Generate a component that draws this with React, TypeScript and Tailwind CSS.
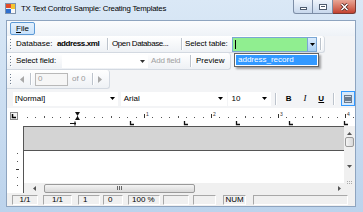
import React from "react";

function Arrow({ color = "#000" }: { color?: string }) {
  return (
    <svg width="5" height="3" viewBox="0 0 5 3">
      <polygon points="0,0 5,0 2.5,3" fill={color} />
    </svg>
  );
}

function Grip() {
  return (
    <div className="flex h-[12px] w-[2px] flex-col justify-between py-[1px]">
      {[0, 1, 2, 3].map((i) => (
        <div key={i} className="h-[1px] w-[1px] bg-[#6b7a8c] shadow-[1px_1px_0_#fff]" />
      ))}
    </div>
  );
}

function Sep({ w = 7 }: { w?: number }) {
  return (
    <div className="flex h-full items-center justify-center" style={{ width: w }}>
      <div className="h-[12px] w-px bg-[#bcc3cc]" />
      <div className="h-[12px] w-px bg-white" />
    </div>
  );
}

function TitleBar() {
  return (
    <div className="flex h-[20px] shrink-0 items-start">
      <div className="ml-[5px] mt-[3px] h-[11px] w-[11px]">
        <svg width="11" height="11" viewBox="0 0 11 11">
          <rect x="0.5" y="0.5" width="10" height="10" fill="#e9eef5" stroke="#8093ab" />
          <rect x="1" y="1" width="5" height="4" fill="#e24a2a" />
          <rect x="6" y="1" width="4" height="5" fill="#f4c430" />
          <rect x="1" y="6" width="5" height="4" fill="#2f6fcf" />
          <rect x="6" y="6" width="4" height="4" fill="#f7f7f7" />
        </svg>
      </div>
      <div className="ml-[5px] mt-[5px] whitespace-nowrap text-[7.8px] tracking-[-0.2px] text-black">
        TX Text Control Sample: Creating Templates
      </div>
      <div className="ml-auto mr-[7px] flex">
        <div className="flex h-[14px] w-[20px] items-center justify-center rounded-bl-[3px] border border-t-0 border-[#7d8ea6] bg-gradient-to-b from-[#eef4fb] to-[#c8d8ec]">
          <div className="mt-[4px] h-[3px] w-[7px] border border-[#4d5b6e] bg-white" />
        </div>
        <div className="flex h-[14px] w-[20px] items-center justify-center border-y border-r border-t-0 border-[#7d8ea6] bg-gradient-to-b from-[#eef4fb] to-[#c8d8ec]">
          <div className="h-[6px] w-[8px] border border-[#4d5b6e] bg-white p-[1px]">
            <div className="h-full w-full border-t border-[#4d5b6e]" />
          </div>
        </div>
        <div className="flex h-[14px] w-[23px] items-center justify-center rounded-br-[3px] border border-l-0 border-t-0 border-[#7a3a32] bg-gradient-to-b from-[#e8a696] to-[#c3412f]">
          <svg width="9" height="8" viewBox="0 0 9 8">
            <path d="M1.5 1 L7.5 7 M7.5 1 L1.5 7" stroke="#4a1a14" strokeWidth="3" />
            <path d="M1.5 1 L7.5 7 M7.5 1 L1.5 7" stroke="#fff" strokeWidth="1.6" />
          </svg>
        </div>
      </div>
    </div>
  );
}

function MenuBar() {
  return (
    <div className="flex h-[15px] shrink-0 items-center bg-gradient-to-b from-[#fbfcfd] to-[#eef2f7]">
      <div className="ml-[3px] flex h-[13px] w-[25px] items-center justify-center rounded-[2px] border border-[#5d9ad6] bg-gradient-to-b from-[#e4f1fd] to-[#c9e2fb]">
        <span>
          <span className="underline">F</span>ile
        </span>
      </div>
    </div>
  );
}

function ToolbarOne() {
  return (
    <div className="flex h-[17px] shrink-0">
      <div className="flex h-full w-[318px] items-center rounded-r-[3px] border-b border-r border-[#d3d9e1] bg-gradient-to-b from-white to-[#eef1f5]">
        <div className="flex w-[9px] justify-end pr-[4px]">
          <Grip />
        </div>
        <span className="w-[41px] whitespace-nowrap">Database:</span>
        <span className="w-[47px] whitespace-nowrap font-bold tracking-[-0.4px]">address.xml</span>
        <Sep w={7} />
        <span className="w-[68px] whitespace-nowrap pl-[1px] tracking-[-0.4px]">Open Database...</span>
        <Sep w={6} />
        <span className="w-[47px] whitespace-nowrap tracking-[-0.1px]">Select table:</span>
        <div className="flex h-[15px] w-[85px] items-stretch border border-[#7aa6d4] bg-[#90ee90]">
          <div className="ml-[2px] mt-[2px] h-[9px] w-px bg-black" />
          <div className="ml-auto flex w-[9px] items-center justify-center border-l border-[#7aa6d4] bg-gradient-to-b from-[#d9ebfc] to-[#a9cff3]">
            <Arrow />
          </div>
        </div>
        <Sep w={7} />
      </div>
    </div>
  );
}

function ToolbarTwo() {
  return (
    <div className="relative flex h-[17px] shrink-0">
      <div className="flex h-full w-[224px] items-center rounded-r-[3px] border-b border-r border-[#d3d9e1] bg-gradient-to-b from-white to-[#eef1f5]">
        <div className="flex w-[9px] justify-end pr-[4px]">
          <Grip />
        </div>
        <span className="w-[46px] whitespace-nowrap tracking-[-0.1px]">Select field:</span>
        <div className="flex h-[13px] w-[86px] items-center justify-end bg-white pr-[3px]">
          <Arrow color="#333" />
        </div>
        <span className="w-[39px] whitespace-nowrap pl-[3px] tracking-[-0.2px] text-[#a0a0a0]">Add field</span>
        <Sep w={7} />
        <span className="whitespace-nowrap pl-[2px]">Preview</span>
      </div>
      <div className="absolute left-[227px] top-0 w-[85px] border border-[#646464] bg-white p-px shadow-[2px_2px_2px_rgba(0,0,0,0.35)]">
        <div className="flex h-[10px] items-center bg-[#3399ff] pl-[2px] text-white">address_record</div>
      </div>
    </div>
  );
}

function ToolbarThree() {
  return (
    <div className="flex h-[19px] shrink-0">
      <div className="flex h-full w-[103px] items-center rounded-r-[3px] border-b border-r border-[#d3d9e1] bg-gradient-to-b from-white to-[#eef1f5]">
        <div className="flex w-[9px] justify-end pr-[4px]">
          <Grip />
        </div>
        <div className="flex w-[12px] justify-center">
          <svg width="4" height="7" viewBox="0 0 4 7">
            <polygon points="4,0 4,7 0,3.5" fill="#a8a8a8" />
          </svg>
        </div>
        <Sep w={6} />
        <div className="ml-px flex h-[13px] w-[33px] items-center border border-[#b9b9b9] bg-[#f6f6f6] pl-[2px] text-[#9a9a9a]">
          0
        </div>
        <span className="w-[22px] whitespace-nowrap pl-[4px] text-[#9a9a9a]">of 0</span>
        <Sep w={5} />
        <div className="flex w-[9px] justify-center">
          <svg width="4" height="7" viewBox="0 0 4 7">
            <polygon points="0,0 0,7 4,3.5" fill="#a8a8a8" />
          </svg>
        </div>
      </div>
    </div>
  );
}

function FormatBar() {
  return (
    <div className="flex h-[19px] shrink-0 items-center bg-[#f3f4f6]">
      <div className="ml-[6px] flex h-[14px] w-[109px] items-center justify-between bg-white pl-[2px] pr-[3px]">
        <span>[Normal]</span>
        <Arrow />
      </div>
      <div className="ml-[3px] flex h-[14px] w-[111px] items-center justify-between bg-white pl-[3px] pr-[4px]">
        <span>Arial</span>
        <Arrow />
      </div>
      <div className="ml-px flex h-[14px] w-[44px] items-center justify-between bg-white pl-[3px] pr-[4px]">
        <span>10</span>
        <Arrow />
      </div>
      <Sep w={10} />
      <div className="flex w-[17px] justify-center font-bold">B</div>
      <div className="flex w-[17px] justify-center font-['Liberation_Serif',serif] text-[9px] italic">I</div>
      <div className="flex w-[17px] justify-center font-bold underline">U</div>
      <Sep w={10} />
      <div className="ml-[2px] flex h-[15px] w-[14px] shrink-0 items-center justify-center border border-[#3399ff] bg-[#d6e9fc]">
        <div className="flex h-[8px] w-[8px] flex-col justify-between bg-[#6b7b8e] p-px">
          <div className="h-px bg-[#cfd8e3]" />
          <div className="h-px bg-[#cfd8e3]" />
        </div>
      </div>
    </div>
  );
}

function Ruler() {
  const zero = 70;
  const unit = 67 / 8;
  const marks: React.ReactNode[] = [];
  for (let k = -6; k <= 33; k++) {
    const x = Math.round(zero + k * unit);
    if (x > 346) break;
    if (k % 8 === 0 && k > 0) {
      marks.push(<rect key={"t" + k} x={x} y={6} width={1} height={4} fill="#333" />);
      marks.push(
        <text key={"n" + k} x={x + 2} y={8} fontSize="5" fontFamily="Liberation Sans, Arial, sans-serif" fill="#333">
          {k / 8}
        </text>
      );
    } else if (k % 4 === 0) {
      marks.push(<rect key={"h" + k} x={x} y={8} width={1} height={2} fill="#555" />);
    } else {
      marks.push(<rect key={"d" + k} x={x} y={9} width={1} height={1} fill="#555" />);
    }
  }
  const tabs = [123, 177, 229, 282, 337];
  return (
    <div className="h-[18px] shrink-0 bg-white">
      <svg width="349" height="18" viewBox="0 0 349 18">
        <rect x="3.5" y="4.5" width="7" height="7" fill="#f4f4f4" stroke="#8a8a8a" />
        <path d="M5.5 6 V9.5 H9" stroke="#000" strokeWidth="1.5" fill="none" />
        {marks}
        <polygon points="68,4 73,4 70.5,8 73,12 68,12 70.5,8" fill="#111" />
        <path d="M63 15.5 H69 M68 13.5 V17.5" stroke="#111" strokeWidth="1.2" />
        {tabs.map((t) => (
          <path key={t} d={`M${t + 0.5} 13 V16.5 H${t + 4}`} stroke="#111" strokeWidth="1.3" fill="none" />
        ))}
      </svg>
    </div>
  );
}

function DocumentArea() {
  return (
    <div className="flex h-[67px] shrink-0 bg-white">
      <div className="w-[16px] shrink-0">
        <svg width="16" height="67" viewBox="0 0 16 67">
          {[27, 35, 51, 59].map((y) => (
            <rect key={y} x="10" y={y} width="1" height="1" fill="#555" />
          ))}
          <rect x="9" y="43" width="3" height="1" fill="#333" />
        </svg>
      </div>
      <div className="flex w-[321px] flex-col border-l border-[#555]">
        <div className="h-[25px] border-y border-[#555] bg-[#d4d4d4]" />
        <div className="flex-1 bg-white" />
        <div className="flex h-[10px] items-center bg-[#f0f0f0]">
          <div className="flex w-[20px] justify-center">
            <svg width="3" height="5" viewBox="0 0 3 5">
              <polygon points="3,0 3,5 0,2.5" fill="#555" />
            </svg>
          </div>
          <div className="flex h-[9px] w-[151px] items-center justify-center rounded-[2px] border border-[#9a9a9a] bg-gradient-to-b from-[#f4f4f4] to-[#d9d9d9]">
            <div className="flex gap-px">
              <div className="h-[4px] w-px bg-[#666]" />
              <div className="h-[4px] w-px bg-[#666]" />
              <div className="h-[4px] w-px bg-[#666]" />
            </div>
          </div>
          <div className="ml-auto flex w-[10px] justify-center">
            <svg width="3" height="5" viewBox="0 0 3 5">
              <polygon points="0,0 0,5 3,2.5" fill="#555" />
            </svg>
          </div>
        </div>
      </div>
      <div className="flex w-[11px] flex-col bg-[#f0f0f0]">
        <div className="flex h-[11px] items-end justify-center pb-[2px]">
          <svg width="5" height="3" viewBox="0 0 5 3">
            <polygon points="0,3 5,3 2.5,0" fill="#555" />
          </svg>
        </div>
        <div className="mx-px h-[10px] rounded-[2px] border border-[#9a9a9a] bg-gradient-to-r from-[#f4f4f4] to-[#d9d9d9]" />
        <div className="flex h-[24px] items-end justify-center pb-[3px]">
          <Arrow color="#555" />
        </div>
        <div className="flex flex-1 items-center justify-center">
          <div className="grid grid-cols-3 gap-px">
            {[0, 1, 2, 3, 4, 5].map((i) => (
              <div key={i} className="h-px w-px bg-[#aaa]" />
            ))}
          </div>
        </div>
      </div>
    </div>
  );
}

const PANELS: { w: number; ml: number; text: string; align: string }[] = [
  { w: 26, ml: 5, text: "1/1", align: "justify-center" },
  { w: 29, ml: 5, text: "1/1", align: "justify-center" },
  { w: 22, ml: 6, text: "1", align: "justify-start pl-[4px]" },
  { w: 20, ml: 3, text: "0", align: "justify-start pl-[4px]" },
  { w: 32, ml: 5, text: "100 %", align: "justify-start pl-[3px]" },
  { w: 26, ml: 3, text: "", align: "justify-center" },
  { w: 23, ml: 4, text: "", align: "justify-center" },
  { w: 23, ml: 7, text: "NUM", align: "justify-center" },
  { w: 95, ml: 7, text: "", align: "justify-center" },
];

function StatusBar() {
  return (
    <div className="flex h-[13px] shrink-0 items-center bg-[#f0f0f0]">
      {PANELS.map((p, i) => (
        <div
          key={i}
          className={`flex h-[10px] shrink-0 items-center border border-b-white border-l-[#a8a8a8] border-r-white border-t-[#a8a8a8] ${p.align}`}
          style={{ width: p.w, marginLeft: p.ml }}
        >
          {p.text}
        </div>
      ))}
    </div>
  );
}

export default function App() {
  return (
    <div className="flex h-[212px] w-[363px] flex-col overflow-hidden bg-gradient-to-b from-[#dae8f6] to-[#bcd3ec] font-['Liberation_Sans',Arial,sans-serif] text-[8px] leading-none text-black">
      <TitleBar />
      <div className="ml-[6px] mr-[7px] flex h-[187px] flex-col overflow-hidden border border-[#8ea4bf] bg-[#f3f4f6]">
        <MenuBar />
        <ToolbarOne />
        <ToolbarTwo />
        <ToolbarThree />
        <FormatBar />
        <Ruler />
        <DocumentArea />
        <StatusBar />
      </div>
    </div>
  );
}
